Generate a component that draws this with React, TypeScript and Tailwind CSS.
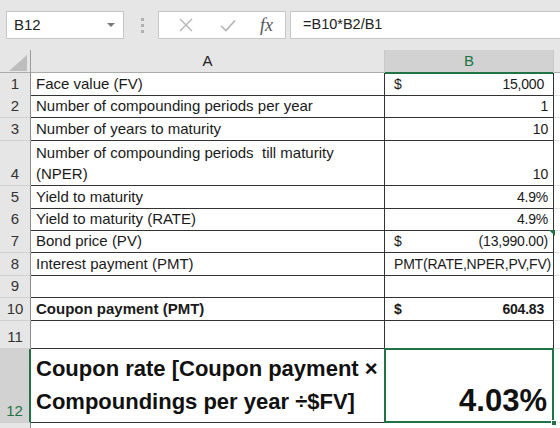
import React from 'react';

type BVal = { text: string; dollar?: boolean; acct?: boolean; bold?: boolean };
type Row = { n: string; h: number; a?: React.ReactNode; b?: BVal; aBold?: boolean };

const rows: Row[] = [
  { n: '1', h: 22, a: 'Face value (FV)', b: { text: '15,000', dollar: true, acct: true } },
  { n: '2', h: 23, a: 'Number of compounding periods per year', b: { text: '1' } },
  { n: '3', h: 23, a: 'Number of years to maturity', b: { text: '10' } },
  { n: '4', h: 45, a: 'Number of compounding periods  till maturity\n(NPER)', b: { text: '10' } },
  { n: '5', h: 22, a: 'Yield to maturity', b: { text: '4.9%' } },
  { n: '6', h: 22, a: 'Yield to maturity (RATE)', b: { text: '4.9%' } },
  { n: '7', h: 23, a: 'Bond price (PV)', b: { text: '(13,990.00)', dollar: true } },
  { n: '8', h: 23, a: 'Interest payment (PMT)', b: { text: 'PMT(RATE,NPER,PV,FV)' } },
  { n: '9', h: 22 },
  { n: '10', h: 23, a: 'Coupon payment (PMT)', aBold: true, b: { text: '604.83', dollar: true, acct: true, bold: true } },
  { n: '11', h: 28 },
];

const font = { fontFamily: '"Liberation Sans", Arial, sans-serif' };

const TopBar = () => (
  <div className="h-[50px] bg-[#e6e6e6] relative flex items-start pt-[11px]">
    <div className="ml-[6px] w-[118px] h-[28px] bg-white border border-[#c6c6c6] flex items-center justify-between pl-[7px] pr-[8px]">
      <span className="text-[15px] text-[#222]">B12</span>
      <svg width="8" height="5" viewBox="0 0 8 5"><path d="M0 0 L8 0 L4 4 Z" fill="#777" /></svg>
    </div>
    <div className="ml-[17px] mt-[7px] flex flex-col gap-[3px]">
      <div className="w-[3px] h-[3px] bg-[#b0b0b0]" />
      <div className="w-[3px] h-[3px] bg-[#b0b0b0]" />
      <div className="w-[3px] h-[3px] bg-[#b0b0b0]" />
    </div>
    <div className="ml-[14px] w-[128px] h-[28px] bg-white border border-[#c6c6c6] flex items-center">
      <svg className="ml-[20px]" width="14" height="14" viewBox="0 0 14 14">
        <path d="M1 1 L13 13 M13 1 L1 13" stroke="#b4b4b4" strokeWidth="1.3" />
      </svg>
      <svg className="ml-[27px]" width="16" height="13" viewBox="0 0 16 13">
        <path d="M1 7 L6 11.5 L15 1.5" stroke="#b4b4b4" strokeWidth="1.6" fill="none" />
      </svg>
      <span className="ml-[24px] text-[18px] italic text-[#555]" style={{ fontFamily: '"Liberation Serif", serif' }}>fx</span>
    </div>
    <div className="ml-[4px] flex-1 h-[28px] bg-white border border-[#c6c6c6] border-r-0 flex items-center pl-[12px]">
      <span className="text-[14.5px] text-[#222]">=B10*B2/B1</span>
    </div>
  </div>
);

const Header = () => (
  <div className="grid grid-cols-[31px_354px_169px_1fr] h-[23px] bg-[#e6e6e6] border-b border-[#ababab]">
    <div className="border-r border-[#9b9b9b] flex items-end justify-end pr-[3px] pb-[2px]">
      <svg width="18" height="16" viewBox="0 0 18 16"><path d="M18 0 L18 16 L0 16 Z" fill="#bdbdbd" /></svg>
    </div>
    <div className="border-r border-[#c8c8c8] flex items-center justify-center text-[15px] text-[#222]">A</div>
    <div className="bg-[#d2d2d2] border-r border-[#c8c8c8] flex items-center justify-center text-[15px] text-[#217346] relative">
      B
      <div className="absolute left-0 right-0 bottom-[-1px] h-[2px] bg-[#217346]" />
    </div>
    <div />
  </div>
);

const BCell = ({ b }: { b?: BVal }) => {
  if (!b) return <div className="border-r border-b border-[#333]" />;
  return (
    <div
      className={`border-r border-b border-[#333] flex items-end justify-between pl-[9px] pb-[1px] text-[14px] leading-[20px] text-[#1a1a1a] ${b.acct ? 'pr-[9px]' : 'pr-[5px]'} ${b.bold ? 'font-bold' : ''}`}
    >
      <span>{b.dollar ? '$' : ''}</span>
      <span className="whitespace-nowrap tracking-[-0.2px]">{b.text}</span>
    </div>
  );
};

export default function App() {
  return (
    <div className="w-[560px] h-[428px] overflow-hidden bg-white" style={font}>
      <TopBar />
      <Header />
      {rows.map((r) => (
        <div key={r.n} className="grid grid-cols-[31px_354px_169px_1fr]" style={{ height: r.h }}>
          <div className="bg-[#e6e6e6] border-r border-[#8c8c8c] border-b border-b-[#d0d0d0] flex items-end justify-center pb-[1px] text-[15px] leading-[20px] text-[#333]">
            {r.n}
          </div>
          <div
            className={`border-r border-b border-[#333] flex items-end px-[5px] pb-[1px] text-[15px] leading-[21px] text-[#1a1a1a] whitespace-pre ${r.aBold ? 'font-bold' : ''}`}
          >
            {r.a}
          </div>
          {r.n === '7' ? (
            <div className="relative grid">
              <BCell b={r.b} />
              <svg className="absolute right-[-1px] top-0" width="6" height="6" viewBox="0 0 6 6">
                <path d="M0 0 L6 0 L6 6 Z" fill="#217346" />
              </svg>
            </div>
          ) : (
            <BCell b={r.b} />
          )}
          <div className="border-b border-[#e2e2e2]" />
        </div>
      ))}
      <div className="grid grid-cols-[31px_354px_169px_1fr] h-[74px]">
        <div className="bg-[#d2d2d2] border-r-2 border-[#217346] border-b border-b-[#d0d0d0] flex items-end justify-center pb-[1px] text-[15px] leading-[20px] text-[#217346]">
          12
        </div>
        <div className="border-r border-b border-[#333] flex items-end px-[5px] pb-[4px] text-[22px] leading-[33px] font-bold text-[#111] whitespace-pre">
          {'Coupon rate [Coupon payment ×\nCompoundings per year ÷$FV]'}
        </div>
        <div className="relative border-r border-b border-[#333] flex items-end justify-end pr-[6px] pb-[2px] text-[31px] leading-[38px] font-bold text-[#111]">
          4.03%
          <div className="absolute left-[-1px] top-[-1px] right-[-1px] bottom-[-1px] border-2 border-[#217346]" />
          <div className="absolute right-[-4px] bottom-[-4px] w-[6px] h-[6px] bg-[#217346] border border-white" />
        </div>
        <div className="border-b border-[#e2e2e2]" />
      </div>
      <div className="grid grid-cols-[31px_1fr] h-[10px]">
        <div className="bg-[#e6e6e6] border-r border-[#8c8c8c]" />
        <div />
      </div>
    </div>
  );
}
